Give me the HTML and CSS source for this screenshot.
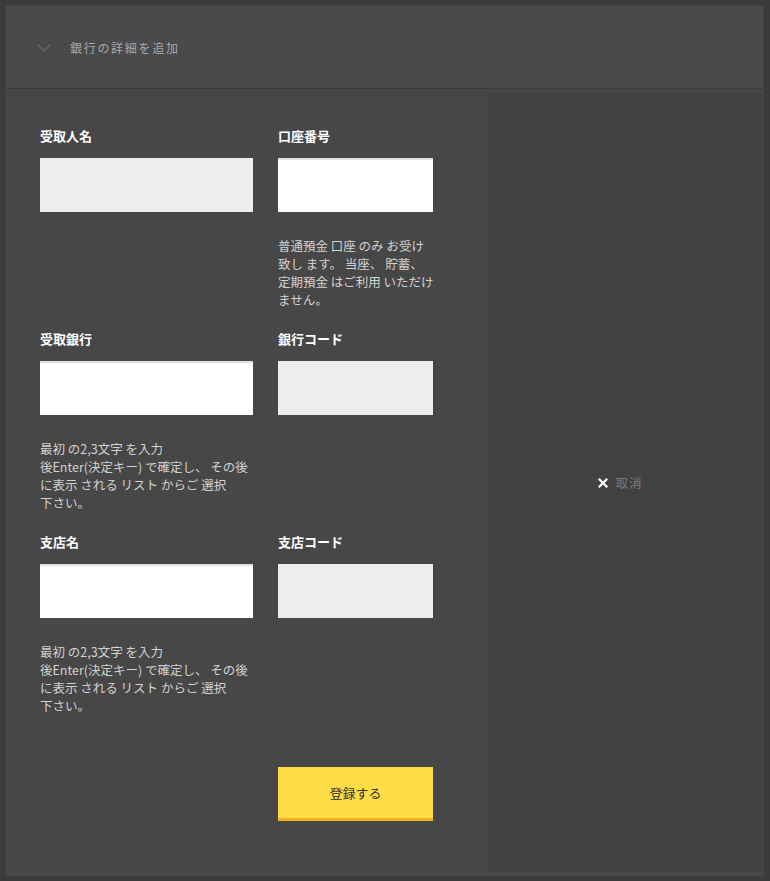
FILE: index.html
```html
<!DOCTYPE html>
<html lang="ja">
<head>
<meta charset="utf-8">
<link rel="stylesheet" href="styles.css">
</head>
<body>
<div class="frame">
  <div class="header">
    <svg class="chev" width="14" height="8" viewBox="0 0 14 8"><path d="M1 1 L7 7 L13 1" fill="none" stroke="#6a6a6a" stroke-width="1.2"/></svg>
    <span class="title">銀行の詳細を追加</span>
  </div>
  <div class="body">
    <div class="form">
      <div class="row">
        <div class="field wide">
          <div class="label">受取人名</div>
          <div class="input disabled"></div>
        </div>
        <div class="field narrow">
          <div class="label">口座番号</div>
          <div class="input"></div>
          <div class="note">普通預金 口座 のみ お受け<br>致し ます。 当座、 貯蓄、<br>定期預金 はご利用 いただけ<br>ません。</div>
        </div>
      </div>
      <div class="row">
        <div class="field wide">
          <div class="label">受取銀行</div>
          <div class="input"></div>
          <div class="note">最初 の2,3文字 を入力<br>後Enter(決定キー) で確定し、 その後<br>に表示 される リスト からご 選択<br>下さい。</div>
        </div>
        <div class="field narrow">
          <div class="label">銀行コード</div>
          <div class="input disabled"></div>
        </div>
      </div>
      <div class="row">
        <div class="field wide">
          <div class="label">支店名</div>
          <div class="input"></div>
          <div class="note">最初 の2,3文字 を入力<br>後Enter(決定キー) で確定し、 その後<br>に表示 される リスト からご 選択<br>下さい。</div>
        </div>
        <div class="field narrow">
          <div class="label">支店コード</div>
          <div class="input disabled"></div>
        </div>
      </div>
      <div class="actions">
        <button class="submit">登録する</button>
      </div>
    </div>
    <div class="side">
      <div class="cancel">
        <svg width="10" height="10" viewBox="0 0 10 10"><path d="M1.5 1.5 L8.5 8.5 M8.5 1.5 L1.5 8.5" stroke="#ffffff" stroke-width="2.2" stroke-linecap="square"/></svg>
        <span>取消</span>
      </div>
    </div>
  </div>
</div>
</body>
</html>
```
FILE: styles.css
```css
html, body {
  margin: 0;
  padding: 0;
  background: #3b3b3b;
}
body {
  width: 770px;
  height: 881px;
  overflow: hidden;
  font-family: "Noto Sans CJK JP", "Noto Sans", sans-serif;
}
.frame {
  margin: 6px 0 0 6px;
  width: 757px;
  height: 870px;
  background: #474747;
  display: flex;
  flex-direction: column;
  box-shadow: 0 0 0 1px #404040;
}
.header {
  height: 83px;
  flex: none;
  background: #4a4a4a;
  border-bottom: 1px solid #393939;
  display: flex;
  align-items: center;
  padding-left: 31px;
  box-sizing: border-box;
}
.chev {
  display: block;
  margin-top: 2px;
}
.title {
  margin-left: 19px;
  font-size: 12px;
  letter-spacing: 1.7px;
  color: #a8a8a8;
}
.body {
  flex: 1;
  display: flex;
}
.form {
  width: 480px;
  flex: none;
  padding: 38px 0 0 34px;
  box-sizing: border-box;
}
.row {
  display: flex;
  gap: 25px;
  height: 203px;
}
.field.wide { width: 213px; }
.field.narrow { width: 155px; }
.label {
  font-size: 13px;
  font-weight: bold;
  color: #ffffff;
  line-height: 18px;
  height: 18px;
}
.input {
  margin-top: 13px;
  height: 54px;
  background: #ffffff;
  border-top: 2px solid #e2e2e2;
  box-sizing: border-box;
}
.input.disabled {
  background: #ededed;
  border-top-color: #ededed;
}
.note {
  margin-top: 25px;
  font-size: 12.5px;
  line-height: 18px;
  color: #d2d2d2;
  white-space: nowrap;
}
.actions {
  padding: 31px 0 0 238px;
}
.submit {
  display: block;
  width: 155px;
  height: 54px;
  border: none;
  border-bottom: 3px solid #f2b01e;
  background: #ffdd47;
  font-family: "Noto Sans CJK JP", sans-serif;
  font-size: 13px;
  color: #333333;
  padding: 0;
  cursor: pointer;
}
.side {
  flex: 1;
  margin: 4px 1px 4px 0;
  background: #414141;
  border-left: 1px solid #4b4b4b;
  display: flex;
  align-items: center;
  justify-content: center;
}
.cancel {
  display: flex;
  align-items: center;
  gap: 7px;
  margin-left: -8px;
  margin-top: 0;
}
.cancel svg { display: block; }
.cancel span {
  font-size: 12.5px;
  color: #7a7a7a;
  letter-spacing: 1px;
}
```
